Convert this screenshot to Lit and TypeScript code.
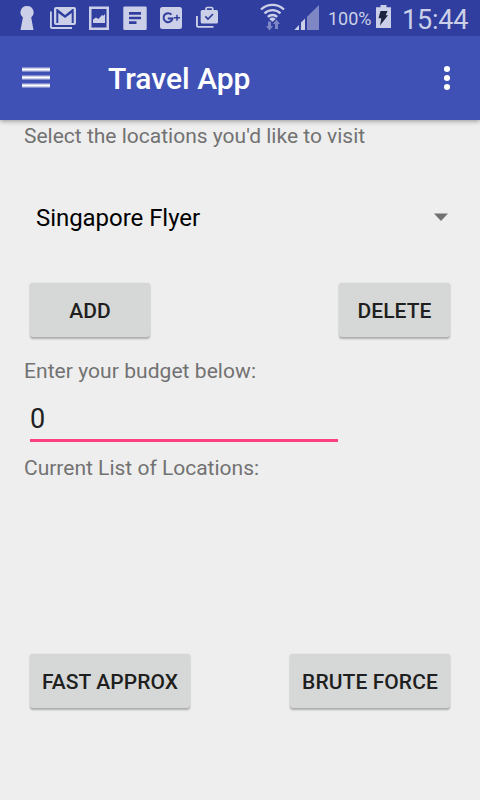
import { LitElement, html, css } from "lit";
import { customElement, property } from "lit/decorators.js";

@customElement("status-bar")
class StatusBar extends LitElement {
  static styles = css`
    :host {
      display: flex;
      position: relative;
      z-index: 1;
      height: 36px;
      background: #303f9f;
      color: #cbcfe7;
      font-family: Roboto, sans-serif;
      line-height: 36px;
      box-sizing: border-box;
      padding-left: 20px;
      white-space: nowrap;
    }
    svg {
      display: block;
      flex: none;
      height: 36px;
      fill: currentColor;
    }
    .signals { margin-left: 38px; }
    .percent { width: 46px; margin-left: 6px; font-size: 18px; padding-top: 1px; }
    .clock { margin-left: 10px; font-size: 27px; padding-top: 2px; letter-spacing: -0.2px; }
  `;

  render() {
    return html`
      <svg width="202" viewBox="20 0 202 36">
        <path d="M27.2 6a6.4 6.4 0 0 1 4 11.4L33.5 30h-13l2.4-12.6A6.4 6.4 0 0 1 27.200 6z" />
        <path d="M50 11.500h1.800V27H72v2H52a2 2 0 0 1-2-2z" />
        <path fill-rule="evenodd" d="M56 7h18a2 2 0 0 1 2 2v14a2 2 0 0 1-2 2H56a2 2 0 0 1-2-2V9a2 2 0 0 1 2-2zM56.300 9v14h2V13l6.700 5 6.700-5v10h2V9h-1.200L65 15 57.500 9z" />
        <path fill-rule="evenodd" d="M89 6.500h20V30H89zM91.500 9v18.500h15V9z" />
        <path d="M93 23v-3.500l3-2 2.500 1.500 3.500-4 1.500.7 1.500-1.700v9z" />
        <path fill-rule="evenodd" d="M124.500 6.500h21a1.200 1.200 0 0 1 1.200 1.200v21a1.200 1.200 0 0 1-1.200 1.200h-21a1.200 1.200 0 0 1-1.200-1.200v-21a1.200 1.200 0 0 1 1.200-1.200zM129 12v2.700h12V12zM129 16.700v2.600h12v-2.600zM129 21.300V24h7.500v-2.700z" />
        <rect x="160" y="7" width="22" height="22" rx="2.500" />
        <g fill="none" stroke="#303f9f" stroke-width="2">
          <path d="M171.500 14.700a4.500 4.500 0 1 0 1 3.800h-4.700" />
          <path d="M177 14.800v6M174 17.800h6" stroke-width="1.500" />
        </g>
        <path d="M196 16h1.900v9.900h15.600v1.900H198a2 2 0 0 1-2-2z" />
        <rect x="200.700" y="10" width="17.300" height="13.500" rx="1.500" />
        <path d="M206 10.500V8.700a1.200 1.200 0 0 1 1.200-1.200h4.300a1.200 1.200 0 0 1 1.200 1.200v1.800" fill="none" stroke="currentColor" stroke-width="1.700" />
        <path d="M205.300 16.300l2.700 2.700 5-5" fill="none" stroke="#303f9f" stroke-width="1.700" />
      </svg>
      <svg class="signals" width="62" viewBox="260 0 62 36">
        <g fill="none" stroke="currentColor" stroke-width="2.300">
          <path d="M261 9.500a16.500 16.500 0 0 1 23 0" />
          <path d="M264.500 13.300a11.600 11.600 0 0 1 16 0" />
          <path d="M267.800 16.900a6.800 6.800 0 0 1 9.400 0" />
        </g>
        <path d="M269.300 18.900a4.500 4.500 0 0 1 6.400 0l-3.200 2.800z" />
        <path d="M268 21.500h3V26h2l-3.500 4.500L266 26h2zM275 29v-5h-2l3.500-4.500L280 24h-2v5z" opacity=".5" />
        <path d="M294.300 30l4.700-5v5zM301 22.500l4-4V30h-4z" />
        <path d="M307 16.700L319 5v25h-12z" opacity=".5" />
      </svg>
      <span class="percent">100%</span>
      <svg width="18" viewBox="374 0 18 36">
        <path d="M380.500 5h6v2.200h4.500V28h-15V7.200h4.500z" />
        <path d="M380.500 11h7l-1.800 4.200h2.300l-8 10.300 1.300-7.200h-2.800z" fill="#1c233f" />
      </svg>
      <span class="clock">15:44</span>
    `;
  }
}

@customElement("raised-button")
class RaisedButton extends LitElement {
  @property() label = "";

  static styles = css`
    :host { display: block; }
    button {
      display: block;
      width: 100%;
      height: 54px;
      padding: 0;
      border: 0;
      border-radius: 3px;
      background: #d6d8d7;
      color: #1e1f1e;
      font: 500 21px/54px Roboto, sans-serif;
      letter-spacing: 0.08px;
      padding-top: 1px;
      white-space: nowrap;
      box-shadow: 0 1.500px 2px rgba(0, 0, 0, 0.27), 0 0 1px rgba(0, 0, 0, 0.12);
    }
  `;

  render() {
    return html`<button>${this.label}</button>`;
  }
}

@customElement("app-root")
class AppRoot extends LitElement {
  static styles = css`
    :host {
      display: flex;
      flex-direction: column;
      height: 800px;
      overflow: hidden;
      background: #eeeeee;
      font-family: Roboto, sans-serif;
    }
    header {
      display: flex;
      align-items: center;
      flex: none;
      height: 84px;
      box-sizing: border-box;
      padding: 0 30px 0 22px;
      background: #3f51b5;
      color: #fff;
      box-shadow: 0 1px 5px rgba(0, 0, 0, 0.4);
    }
    header svg, .spinner svg { display: block; fill: currentColor; }
    h1 {
      flex: 1;
      margin: 0 0 0 58px;
      font-size: 30px;
      font-weight: 500;
      line-height: 40px;
      padding-top: 1px;
    }
    main { display: flex; flex-direction: column; padding: 2px 30px 0; }
    .label {
      margin-left: -6px;
      font-size: 21px;
      line-height: 28px;
      color: #727272;
    }
    .spinner {
      display: flex;
      align-items: center;
      justify-content: space-between;
      height: 48px;
      margin: 44px 2px 41px 6px;
      font-size: 24px;
      letter-spacing: -0.05px;
      color: #000;
    }
    .spinner svg { color: #717171; }
    .row { display: flex; justify-content: space-between; }
    .add { width: 120px; }
    .delete { width: 111px; }
    .wide { width: 160px; }
    .budget-label { margin-top: 20px; letter-spacing: 0.06px; }
    .field {
      width: 308px;
      height: 41px;
      box-sizing: border-box;
      margin: 16px 0 12px;
      border-bottom: 3px solid #ff4081;
      font-size: 27px;
      line-height: 36px;
      color: #212121;
    }
    .list { height: 172px; }
  `;

  render() {
    return html`
      <status-bar></status-bar>
      <header>
        <svg width="28" height="22" viewBox="0 0 28 22">
          <path d="M0 0h28v5H0zM0 8h28v5H0zM0 16h28v5H0z" opacity=".35" />
          <path d="M0 1h28v3H0zM0 9h28v3H0zM0 17h28v3H0z" opacity=".6" />
          <path d="M0 2h28v1H0zM0 10h28v1H0zM0 18h28v1H0z" />
        </svg>
        <h1>Travel App</h1>
        <svg width="6" height="26" viewBox="0 0 6 26">
          <circle cx="3" cy="4" r="3.100" /><circle cx="3" cy="13" r="3.100" /><circle cx="3" cy="22" r="3.100" />
        </svg>
      </header>
      <main>
        <div class="label">Select the locations you'd like to visit</div>
        <div class="spinner">
          <span>Singapore Flyer</span>
          <svg width="14" height="10" viewBox="0 0 14 10"><path d="M0 .5h14L7 8z" /></svg>
        </div>
        <div class="row">
          <raised-button class="add" label="ADD"></raised-button>
          <raised-button class="delete" label="DELETE"></raised-button>
        </div>
        <div class="label budget-label">Enter your budget below:</div>
        <div class="field">0</div>
        <div class="label">Current List of Locations:</div>
        <div class="list"></div>
        <div class="row">
          <raised-button class="wide" label="FAST APPROX"></raised-button>
          <raised-button class="wide" label="BRUTE FORCE"></raised-button>
        </div>
      </main>
    `;
  }
}
